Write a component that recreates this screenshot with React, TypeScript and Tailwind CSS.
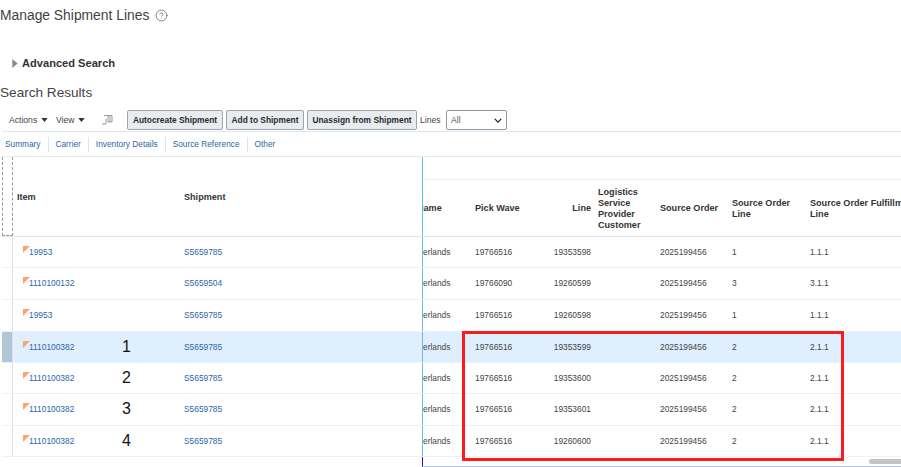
import { CircleHelp } from 'lucide-react';

const rows = [
  { item: '19953', shipment: 'S5659785', wave: '19766516', line: '19353598', order: '2025199456', orderLine: '1', fulfil: '1.1.1', h: 'h-[31px]' },
  { item: '1110100132', shipment: 'S5659504', wave: '19766090', line: '19260599', order: '2025199456', orderLine: '3', fulfil: '3.1.1', h: 'h-[32px]' },
  { item: '19953', shipment: 'S5659785', wave: '19766516', line: '19260598', order: '2025199456', orderLine: '1', fulfil: '1.1.1', h: 'h-[32px]' },
  { item: '1110100382', note: '1', selected: true, shipment: 'S5659785', wave: '19766516', line: '19353599', order: '2025199456', orderLine: '2', fulfil: '2.1.1', h: 'h-[31px]' },
  { item: '1110100382', note: '2', shipment: 'S5659785', wave: '19766516', line: '19353600', order: '2025199456', orderLine: '2', fulfil: '2.1.1', h: 'h-[31px]' },
  { item: '1110100382', note: '3', shipment: 'S5659785', wave: '19766516', line: '19353601', order: '2025199456', orderLine: '2', fulfil: '2.1.1', h: 'h-[32px]' },
  { item: '1110100382', note: '4', shipment: 'S5659785', wave: '19766516', line: '19260600', order: '2025199456', orderLine: '2', fulfil: '2.1.1', h: 'h-[31px]' },
];

const tabs = ['Summary', 'Carrier', 'Inventory Details', 'Source Reference', 'Other'];

function ToolButton({ label, width }: { label: string; width: string }) {
  return (
    <button className={`h-[20px] ${width} shrink-0 rounded-[2px] border border-[#9aa5ad] bg-[#e8ecef] text-[8.4px] font-bold text-[#2b2b2b]`}>
      {label}
    </button>
  );
}

function Caret() {
  return (
    <svg viewBox="0 0 8 5" className="ml-[4px] h-[4px] w-[7px] fill-[#333]">
      <path d="M0 0h8L4 5z" />
    </svg>
  );
}

function Flag() {
  return (
    <svg viewBox="0 0 7 7" className="mb-[5px] -mr-[1px] h-[7px] w-[7px] shrink-0">
      <path d="M0 0h7L0 7z" fill="#fba56a" />
    </svg>
  );
}

export default function App() {
  return (
    <div className="h-[467px] w-[901px] overflow-hidden bg-white font-['Liberation_Sans',Arial,sans-serif] text-[#333]">
      <div className="flex h-[31px] items-center gap-[6px] text-[13.85px] text-[#3f3f3f]">
        <span>Manage Shipment Lines</span>
        <CircleHelp className="h-[13px] w-[13px] text-[#555]" strokeWidth={1.3} />
      </div>

      <div className="mt-[22px] flex h-[20px] items-center pl-[12px]">
        <svg viewBox="0 0 6 10" className="h-[9px] w-[6px] fill-[#8a8a8a]">
          <path d="M0 0l6 5-6 5z" />
        </svg>
        <span className="ml-[4px] text-[11.1px] font-bold text-[#333]">Advanced Search</span>
      </div>

      <div className="mt-[10px] flex h-[20px] items-center text-[13.6px] text-[#444]">Search Results</div>

      {/* Toolbar */}
      <div className="ml-[2px] mt-[7px] flex h-[22px] items-center border-b border-[#dfe7ee] pb-[1px] pl-[7px] text-[8.6px] text-[#444]">
        <span className="flex w-[47px] items-center">Actions<Caret /></span>
        <span className="flex w-[45px] items-center">View<Caret /></span>
        <svg viewBox="0 0 12 12" className="h-[12px] w-[12px]" fill="none" stroke="#9a9a9a" strokeWidth="1">
          <path d="M3 1.5h8v6.5H7M7 1.5v6.5M9 1.5v6.5M5 5v5H1" />
        </svg>
        <div className="ml-[14px] flex items-center gap-[3px]">
          <ToolButton label="Autocreate Shipment" width="w-[96px]" />
          <ToolButton label="Add to Shipment" width="w-[78px]" />
          <ToolButton label="Unassign from Shipment" width="w-[110px]" />
        </div>
        <span className="ml-[3px] w-[26px]">Lines</span>
        <div className="flex h-[20px] w-[61px] items-center justify-between rounded-[2px] border border-[#8d979f] pl-[4px] pr-[4px] text-[#555]">
          <span>All</span>
          <svg viewBox="0 0 10 6" className="h-[5px] w-[8px]" fill="none" stroke="#222" strokeWidth="1.6">
            <path d="M1 1l4 4 4-4" />
          </svg>
        </div>
      </div>

      {/* Tabs */}
      <div className="ml-[2px] flex h-[25px] items-center border-b border-[#e3eaf0] text-[8.3px] text-[#2a66a8]">
        {tabs.map((tab, i) => (
          <span key={tab} className={`flex h-[15px] items-center px-[7px] ${i === 0 ? 'pl-[3px]' : ''} ${i < tabs.length - 1 ? 'border-r border-[#dde5ec]' : ''}`}>
            {tab}
          </span>
        ))}
      </div>

      {/* Table */}
      <div className="relative ml-[2px] text-[8.4px]">
        <div className="flex h-[80px] border-b border-[#dfe7ee] text-[9.1px] font-bold text-[#333]">
          <div className="h-full w-[11px] shrink-0 border-x border-b border-dashed border-[#999]" />
          <div className="w-[171px] shrink-0 pl-[4px] pt-[34px]">Item</div>
          <div className="w-[238px] shrink-0 pt-[34px]">Shipment</div>
          <div className="flex-1 overflow-hidden border-l-[1px] border-[#62bde6]">
            <div className="mt-[22px] flex h-[57px] items-center border-t border-[#eef2f6] pt-[2px]">
              <div className="w-[52px] shrink-0 overflow-hidden"><span className="-ml-[6px] inline-block">Name</span></div>
              <div className="w-[78px] shrink-0">Pick Wave</div>
              <div className="w-[38px] shrink-0 text-right">Line</div>
              <div className="ml-[7px] w-[62px] shrink-0 leading-[11.2px]">Logistics Service Provider Customer</div>
              <div className="w-[72px] shrink-0">Source Order</div>
              <div className="w-[78px] shrink-0 leading-[11.2px]">Source Order<br />Line</div>
              <div className="w-[110px] shrink-0 whitespace-nowrap leading-[11.2px]">Source Order Fulfillment<br />Line</div>
            </div>
          </div>
        </div>

        {rows.map((r) => (
          <div key={r.line} className={`flex ${r.h} items-center border-b border-[#edf1f5] text-[#444] ${r.selected ? 'bg-[#e0effe]' : ''}`}>
            <div className={`h-full w-[11px] shrink-0 border-r border-[#d8e1e9] ${r.selected ? 'bg-[#b0c7d8]' : ''}`} />
            <div className="relative flex w-[171px] shrink-0 items-center pl-[10px] text-[#2a66a8]">
              <Flag />
              <span>{r.item}</span>
              {r.note && <span className="absolute left-[109px] top-1/2 -translate-y-1/2 text-[16px] leading-none text-[#111]">{r.note}</span>}
            </div>
            <div className="w-[238px] shrink-0 text-[#2a66a8]">{r.shipment}</div>
            <div className="flex h-full flex-1 items-center overflow-hidden border-l border-[#62bde6]">
              <div className="w-[52px] shrink-0">erlands</div>
              <div className="w-[78px] shrink-0">{r.wave}</div>
              <div className="w-[38px] shrink-0 text-right">{r.line}</div>
              <div className="ml-[7px] w-[62px] shrink-0" />
              <div className="w-[72px] shrink-0">{r.order}</div>
              <div className="w-[78px] shrink-0">{r.orderLine}</div>
              <div className="w-[110px] shrink-0">{r.fulfil}</div>
            </div>
          </div>
        ))}

        {/* Scroll bar */}
        <div className="ml-[420px] flex h-[10px] items-center justify-end border-b border-l border-[#b9c6f0] border-l-[#1f1fb0]">
          <div className="h-[5px] w-[32px] rounded-l-full bg-[#c4c4c4]" />
        </div>

        {/* Red annotation box */}
        <div className="absolute left-[460px] top-[174px] h-[130px] w-[382px] border-[3px] border-[#fb1b1b]" />
      </div>
    </div>
  );
}
